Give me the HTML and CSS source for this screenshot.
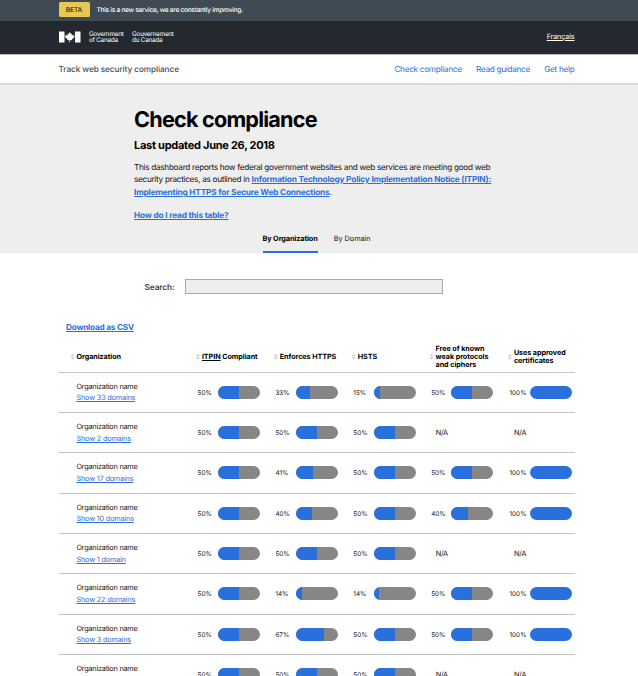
FILE: index.html
```html
<!DOCTYPE html>
<html lang="en">
<head>
<meta charset="utf-8">
<title>Track web security compliance</title>
<link rel="stylesheet" href="styles.css">
</head>
<body>
<div class="beta"><div class="wrap"><span class="badge">BETA</span><span class="beta-text">This is a new service, we are constantly improving.</span></div></div>
<header class="gov"><div class="wrap">
<svg class="flag" viewBox="0 0 22 12"><path fill="#fff" d="M0 .5h5.5v11H0zM16 .5h5.5v11H16zM10.75 1l1.2 2 1-.5-.3 2.2 1.3-1 .4.8 1.3-.1-.5 1.3.5.4-2.6 2.2.2.9-2.1-.3V11.2h-.8V8.9l-2.1.3.2-.9-2.6-2.2.5-.4-.5-1.3 1.3.1.4-.8 1.3 1-.3-2.2 1 .5z"/></svg>
<span class="gov-en">Government<br>of Canada</span><span class="gov-fr">Gouvernement<br>du Canada</span>
<a class="lang">Français</a>
</div></header>
<nav class="nav"><div class="wrap"><span class="site">Track web security compliance</span><a class="n1">Check compliance</a><a class="n2">Read guidance</a><a class="n3">Get help</a></div></nav>
<section class="hero">
<div class="intro">
<h1>Check compliance</h1>
<h2>Last updated June 26, 2018</h2>
<p>This dashboard reports how federal government websites and web services are meeting good web<br>security practices, as outlined in <a>Information Technology Policy Implementation Notice (ITPIN):</a><br><a>Implementing HTTPS for Secure Web Connections</a>.</p>
<a class="how">How do I read this table?</a>
</div>
<div class="tabs"><span class="tab active">By Organization</span><span class="tab">By Domain</span></div>
</section>
<main class="wrap-main">
<div class="search"><label for="q">Search:</label><input id="q" type="text"></div>
<a class="csv">Download as CSV</a>
<div class="row head">
<div class="h org"><i></i><span>Organization</span></div>
<div class="h"><i></i><span><u>ITPIN</u> Compliant</span></div>
<div class="h"><i></i><span>Enforces HTTPS</span></div>
<div class="h"><i></i><span>HSTS</span></div>
<div class="h"><i></i><span>Free of known<br>weak protocols<br>and ciphers</span></div>
<div class="h"><i></i><span>Uses approved<br>certificates</span></div>
</div>
<div id="rows"></div>
</main>
<script src="rows.js"></script>
</body>
</html>
```
FILE: rows.js
```js
const rows = [
  ["Show 33 domains", 50, 33, 15, 50, 100],
  ["Show 2 domains", 50, 50, 50, null, null],
  ["Show 17 domains", 50, 41, 50, 50, 100],
  ["Show 10 domains", 50, 40, 50, 40, 100],
  ["Show 1 domain", 50, 50, 50, null, null],
  ["Show 22 domains", 50, 14, 14, 50, 100],
  ["Show 3 domains", 50, 67, 50, 50, 100],
  ["Show 2 domains", 50, 50, 50, null, null]
];
const cell = v => v === null
  ? '<div class="cell na">N/A</div>'
  : `<div class="cell"><span class="pct">${v}%</span><span class="bar"><b style="width:${v}%"></b></span></div>`;
document.getElementById("rows").innerHTML = rows.map(([link, ...vals]) =>
  `<div class="row"><div class="name">Organization name<br><a>${link}</a></div>${vals.map(cell).join("")}</div>`
).join("");
```
FILE: styles.css
```css
* { box-sizing: border-box; }
html, body { height: 676px; overflow: hidden; }
body { margin: 0; background: #fff; color: #111; font-family: Inter, "Liberation Sans", sans-serif; font-size: 8px; text-rendering: geometricPrecision; }
a { color: #2a70dc; text-decoration: underline; }
.wrap { width: 516px; height: 100%; margin-left: 58.5px; display: flex; align-items: center; }
.beta { height: 21px; background: #3f4a52; color: #fff; }
.badge { width: 31px; height: 15px; margin-top: -2px; border-radius: 1.5px; background: #e9c84f; color: #333b42; font-size: 6.5px; font-weight: 600; line-height: 16px; text-align: center; }
.beta-text { margin: -1px 0 0 7px; font-size: 6.6px; font-weight: 500; letter-spacing: -0.28px; }
.gov { height: 33px; background: #24292f; color: #fff; }
.gov .wrap { padding-bottom: 1px; }
.flag { width: 22px; height: 12px; }
.gov-en, .gov-fr { margin-left: 8.5px; font-size: 6.4px; line-height: 6.5px; letter-spacing: -0.26px; }
.lang { margin-left: auto; color: #fff; font-size: 7.2px; letter-spacing: -0.12px; margin-top: -2px; }
.nav { height: 31px; border-top: 1px solid #bbb; border-bottom: 2px solid #d9d9d9; }
.nav a { margin-left: 14.3px; font-size: 8.2px; text-decoration: none; letter-spacing: -0.28px; }
.nav .n1 { margin-left: auto; }
.site { color: #434c54; font-size: 8.2px; font-weight: 500; letter-spacing: -0.06px; }
.hero { height: 168px; background: #eee; overflow: hidden; display: flex; flex-direction: column; }
.intro { margin-left: 134px; }
h1 { margin: 22px 0 0; font-size: 21.6px; line-height: 26px; font-weight: 700; letter-spacing: -0.77px; color: #000; }
h2 { margin: 5px 0 0; font-size: 11px; line-height: 14px; font-weight: 700; letter-spacing: -0.27px; color: #000; }
p { margin: 9px 0 0; font-size: 8.2px; line-height: 12px; letter-spacing: -0.29px; white-space: nowrap; }
p a, .how { font-size: 8.3px; font-weight: 700; letter-spacing: -0.18px; }
.how { display: block; margin-top: 11px; line-height: 12px; }
.tabs { display: flex; gap: 16px; margin: auto 0 0 262.5px; font-size: 7.3px; letter-spacing: -0.02px; }
.tab { height: 19px; line-height: 10px; border-bottom: 2px solid transparent; }
.active { font-weight: 700; letter-spacing: -0.11px; border-color: #2a70dc; color: #000; }
.wrap-main { width: 516px; margin-left: 58.5px; }
.search { display: flex; align-items: center; padding: 26px 0 0 86px; }
.search label { width: 40.5px; color: #39434b; font-size: 8.2px; font-weight: 600; letter-spacing: -0.05px; }
.search input { width: 258px; height: 15px; padding: 0; border: 1px solid #aaa; background: #eee; }
.csv { display: block; margin: 27px 0 0 7.5px; font-size: 8.2px; line-height: 12px; font-weight: 700; letter-spacing: -0.2px; }
.row { display: grid; grid-template-columns: 139px 77.9px 77.9px 77.9px 78.3px 65px; height: 40.35px; align-items: center; border-bottom: 1px solid #c3c3c3; white-space: nowrap; }
.row.head { height: 39.5px; padding-top: 9px; border-bottom: 1.5px solid #c7c7c7; }
.h { display: flex; align-items: center; margin-left: -1.6px; font-size: 7.2px; line-height: 8px; font-weight: 700; letter-spacing: -0.06px; color: #000; }
.h.org { margin-left: 12px; }
.h i { flex: none; width: 4px; height: 6px; margin-right: 2px; background: #ccc; clip-path: polygon(50% 0, 100% 42%, 0 42%, 0 58%, 100% 58%, 50% 100%, 0 58%, 0 42%); }
.name { padding: 0 0 0 18px; font-size: 7.3px; line-height: 11.6px; letter-spacing: -0.23px; }
.name a { letter-spacing: -0.19px; }
.cell { display: flex; align-items: center; font-size: 6.4px; }
.pct { width: 20.3px; padding-top: 1px; }
.bar { width: 42px; height: 13px; border-radius: 7px; overflow: hidden; background: #868686; }
.bar b { display: block; height: 100%; background: #2a70dc; }
.na { padding-left: 4.5px; font-size: 7.3px; letter-spacing: -0.25px; }
```
